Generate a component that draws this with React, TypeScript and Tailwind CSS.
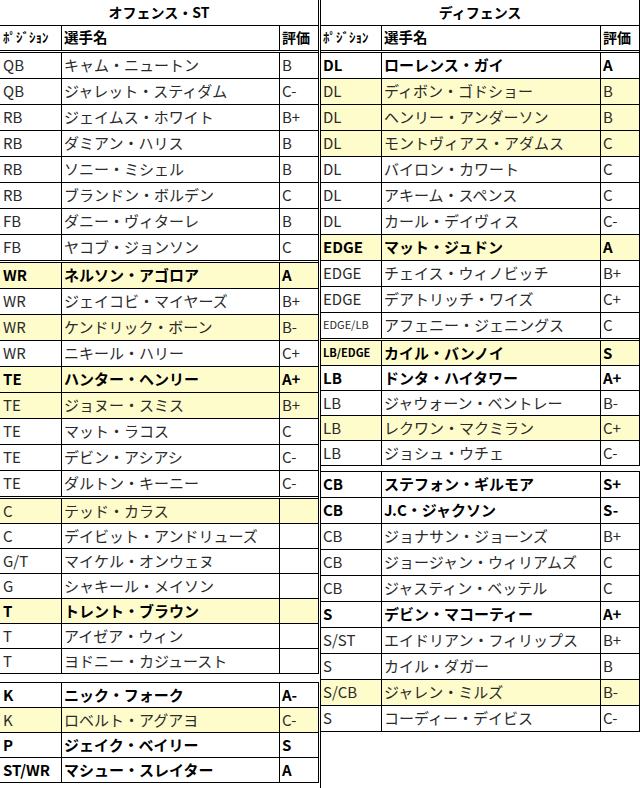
import React from 'react';

type Row = { pos: string; name: string; grade: string; bold: boolean; hl: boolean; sm: boolean };
type Section = { rows: Row[]; h: 25 | 26; end: 'double' | 'gap' | 'none'; topBorder?: boolean; gap?: 'h-[8px]' | 'h-[5px]' };

// flags: b = bold, y = yellow highlight, s = small position text
const r = (pos: string, name: string, grade = '', flags = ''): Row => ({
  pos,
  name,
  grade,
  bold: flags.includes('b'),
  hl: flags.includes('y'),
  sm: flags.includes('s'),
});

const OFFENSE: Section[] = [
  {
    h: 26,
    end: 'double',
    rows: [
      r('QB', 'キャム・ニュートン', 'B'),
      r('QB', 'ジャレット・スティダム', 'C-'),
      r('RB', 'ジェイムス・ホワイト', 'B+'),
      r('RB', 'ダミアン・ハリス', 'B'),
      r('RB', 'ソニー・ミシェル', 'B'),
      r('RB', 'ブランドン・ボルデン', 'C'),
      r('FB', 'ダニー・ヴィターレ', 'B'),
      r('FB', 'ヤコブ・ジョンソン', 'C'),
    ],
  },
  {
    h: 26,
    end: 'double',
    rows: [
      r('WR', 'ネルソン・アゴロア', 'A', 'by'),
      r('WR', 'ジェイコビ・マイヤーズ', 'B+'),
      r('WR', 'ケンドリック・ボーン', 'B-', 'y'),
      r('WR', 'ニキール・ハリー', 'C+'),
      r('TE', 'ハンター・ヘンリー', 'A+', 'by'),
      r('TE', 'ジョヌー・スミス', 'B+', 'y'),
      r('TE', 'マット・ラコス', 'C'),
      r('TE', 'デビン・アシアシ', 'C-'),
      r('TE', 'ダルトン・キーニー', 'C-'),
    ],
  },
  {
    h: 25,
    end: 'gap',
    gap: 'h-[8px]',
    rows: [
      r('C', 'テッド・カラス', '', 'y'),
      r('C', 'デイビット・アンドリューズ'),
      r('G/T', 'マイケル・オンウェヌ'),
      r('G', 'シャキール・メイソン'),
      r('T', 'トレント・ブラウン', '', 'by'),
      r('T', 'アイゼア・ウィン'),
      r('T', 'ヨドニー・カジュースト'),
    ],
  },
  {
    h: 25,
    end: 'none',
    topBorder: true,
    rows: [
      r('K', 'ニック・フォーク', 'A-', 'b'),
      r('K', 'ロベルト・アグアヨ', 'C-', 'y'),
      r('P', 'ジェイク・ベイリー', 'S', 'b'),
      r('ST/WR', 'マシュー・スレイター', 'A', 'b'),
    ],
  },
];

const DEFENSE: Section[] = [
  {
    h: 26,
    end: 'double',
    rows: [
      r('DL', 'ローレンス・ガイ', 'A', 'b'),
      r('DL', 'ディボン・ゴドショー', 'B', 'y'),
      r('DL', 'ヘンリー・アンダーソン', 'B', 'y'),
      r('DL', 'モントヴィアス・アダムス', 'C', 'y'),
      r('DL', 'バイロン・カワート', 'C'),
      r('DL', 'アキーム・スペンス', 'C'),
      r('DL', 'カール・デイヴィス', 'C-'),
      r('EDGE', 'マット・ジュドン', 'A', 'by'),
      r('EDGE', 'チェイス・ウィノビッチ', 'B+'),
      r('EDGE', 'デアトリッチ・ワイズ', 'C+'),
      r('EDGE/LB', 'アフェニー・ジェニングス', 'C', 's'),
    ],
  },
  {
    h: 25,
    end: 'gap',
    gap: 'h-[5px]',
    rows: [
      r('LB/EDGE', 'カイル・バンノイ', 'S', 'bys'),
      r('LB', 'ドンタ・ハイタワー', 'A+', 'b'),
      r('LB', 'ジャウォーン・ベントレー', 'B-'),
      r('LB', 'レクワン・マクミラン', 'C+', 'y'),
      r('LB', 'ジョシュ・ウチェ', 'C-'),
    ],
  },
  {
    h: 26,
    end: 'none',
    topBorder: true,
    rows: [
      r('CB', 'ステフォン・ギルモア', 'S+', 'b'),
      r('CB', 'J.C・ジャクソン', 'S-', 'b'),
      r('CB', 'ジョナサン・ジョーンズ', 'B+'),
      r('CB', 'ジョージャン・ウィリアムズ', 'C'),
      r('CB', 'ジャスティン・ベッテル', 'C'),
      r('S', 'デビン・マコーティー', 'A+', 'b'),
      r('S/ST', 'エイドリアン・フィリップス', 'B+'),
      r('S', 'カイル・ダガー', 'B'),
      r('S/CB', 'ジャレン・ミルズ', 'B-', 'y'),
      r('S', 'コーディー・デイビス', 'C-'),
    ],
  },
];

const ROW_H = {
  25: { plain: 'h-[25px] border-b', double: 'h-[27px] border-b-[3px] border-double' },
  26: { plain: 'h-[26px] border-b', double: 'h-[28px] border-b-[3px] border-double' },
};

function DataRow({ row, h, double, cols, posPad }: { row: Row; h: 25 | 26; double: boolean; cols: string; posPad: string }) {
  const tone = row.bold ? 'font-bold text-black' : 'text-[#2b2b2b]';
  const bg = row.hl ? 'bg-[#fffccc]' : 'bg-white';
  const height = double ? ROW_H[h].double : ROW_H[h].plain;
  return (
    <div className={`grid ${cols} ${bg} ${height} border-black text-[15px] leading-none ${tone}`}>
      <div className={`flex items-center border-r border-black pb-[2px] ${posPad} ${row.sm ? 'text-[11px]' : ''}`}>{row.pos}</div>
      <div className="flex items-center whitespace-nowrap border-r border-black pb-[2px] pl-[2px]">{row.name}</div>
      <div className="flex items-center pb-[2px] pl-[2px]">{row.grade}</div>
    </div>
  );
}

function Roster({ title, sections, cols, posPad }: { title: string; sections: Section[]; cols: string; posPad: string }) {
  return (
    <div className="flex flex-col">
      <div className="flex h-[26px] items-center justify-center border-b border-r border-black pb-[1px] text-[14px] font-bold text-black">
        {title}
      </div>
      <div className={`grid ${cols} h-[27px] border-b-[3px] border-r border-double border-black font-bold text-black`}>
        <div className={`flex items-center border-r border-black pb-[2px] ${posPad} text-[13px]`}>ﾎﾟｼﾞｼｮﾝ</div>
        <div className="flex items-center border-r border-black pb-[2px] pl-[2px] text-[14.5px]">選手名</div>
        <div className="flex items-center pb-[2px] pl-[2px] text-[14px]">評価</div>
      </div>
      {sections.map((s, i) => (
        <React.Fragment key={i}>
          <div className={`flex flex-col border-r border-black ${s.topBorder ? 'border-t' : ''}`}>
            {s.rows.map((row, j) => (
              <DataRow
                key={row.name}
                row={row}
                h={s.h}
                double={s.end === 'double' && j === s.rows.length - 1}
                cols={cols}
                posPad={posPad}
              />
            ))}
          </div>
          {s.gap && <div className={s.gap} />}
        </React.Fragment>
      ))}
    </div>
  );
}

export default function App() {
  return (
    <div className="flex h-[788px] w-[640px] bg-white font-['Noto_Sans_CJK_JP','Noto_Sans',sans-serif]">
      <div className="w-[320px]">
        <div className="w-[319px]">
          <Roster title="オフェンス・ST" sections={OFFENSE} cols="grid-cols-[62px_218px_38px]" posPad="pl-[3px]" />
        </div>
      </div>
      <div className="w-[320px] border-l border-black">
        <Roster title="ディフェンス" sections={DEFENSE} cols="grid-cols-[61px_219px_38px]" posPad="pl-[2px]" />
      </div>
    </div>
  );
}
